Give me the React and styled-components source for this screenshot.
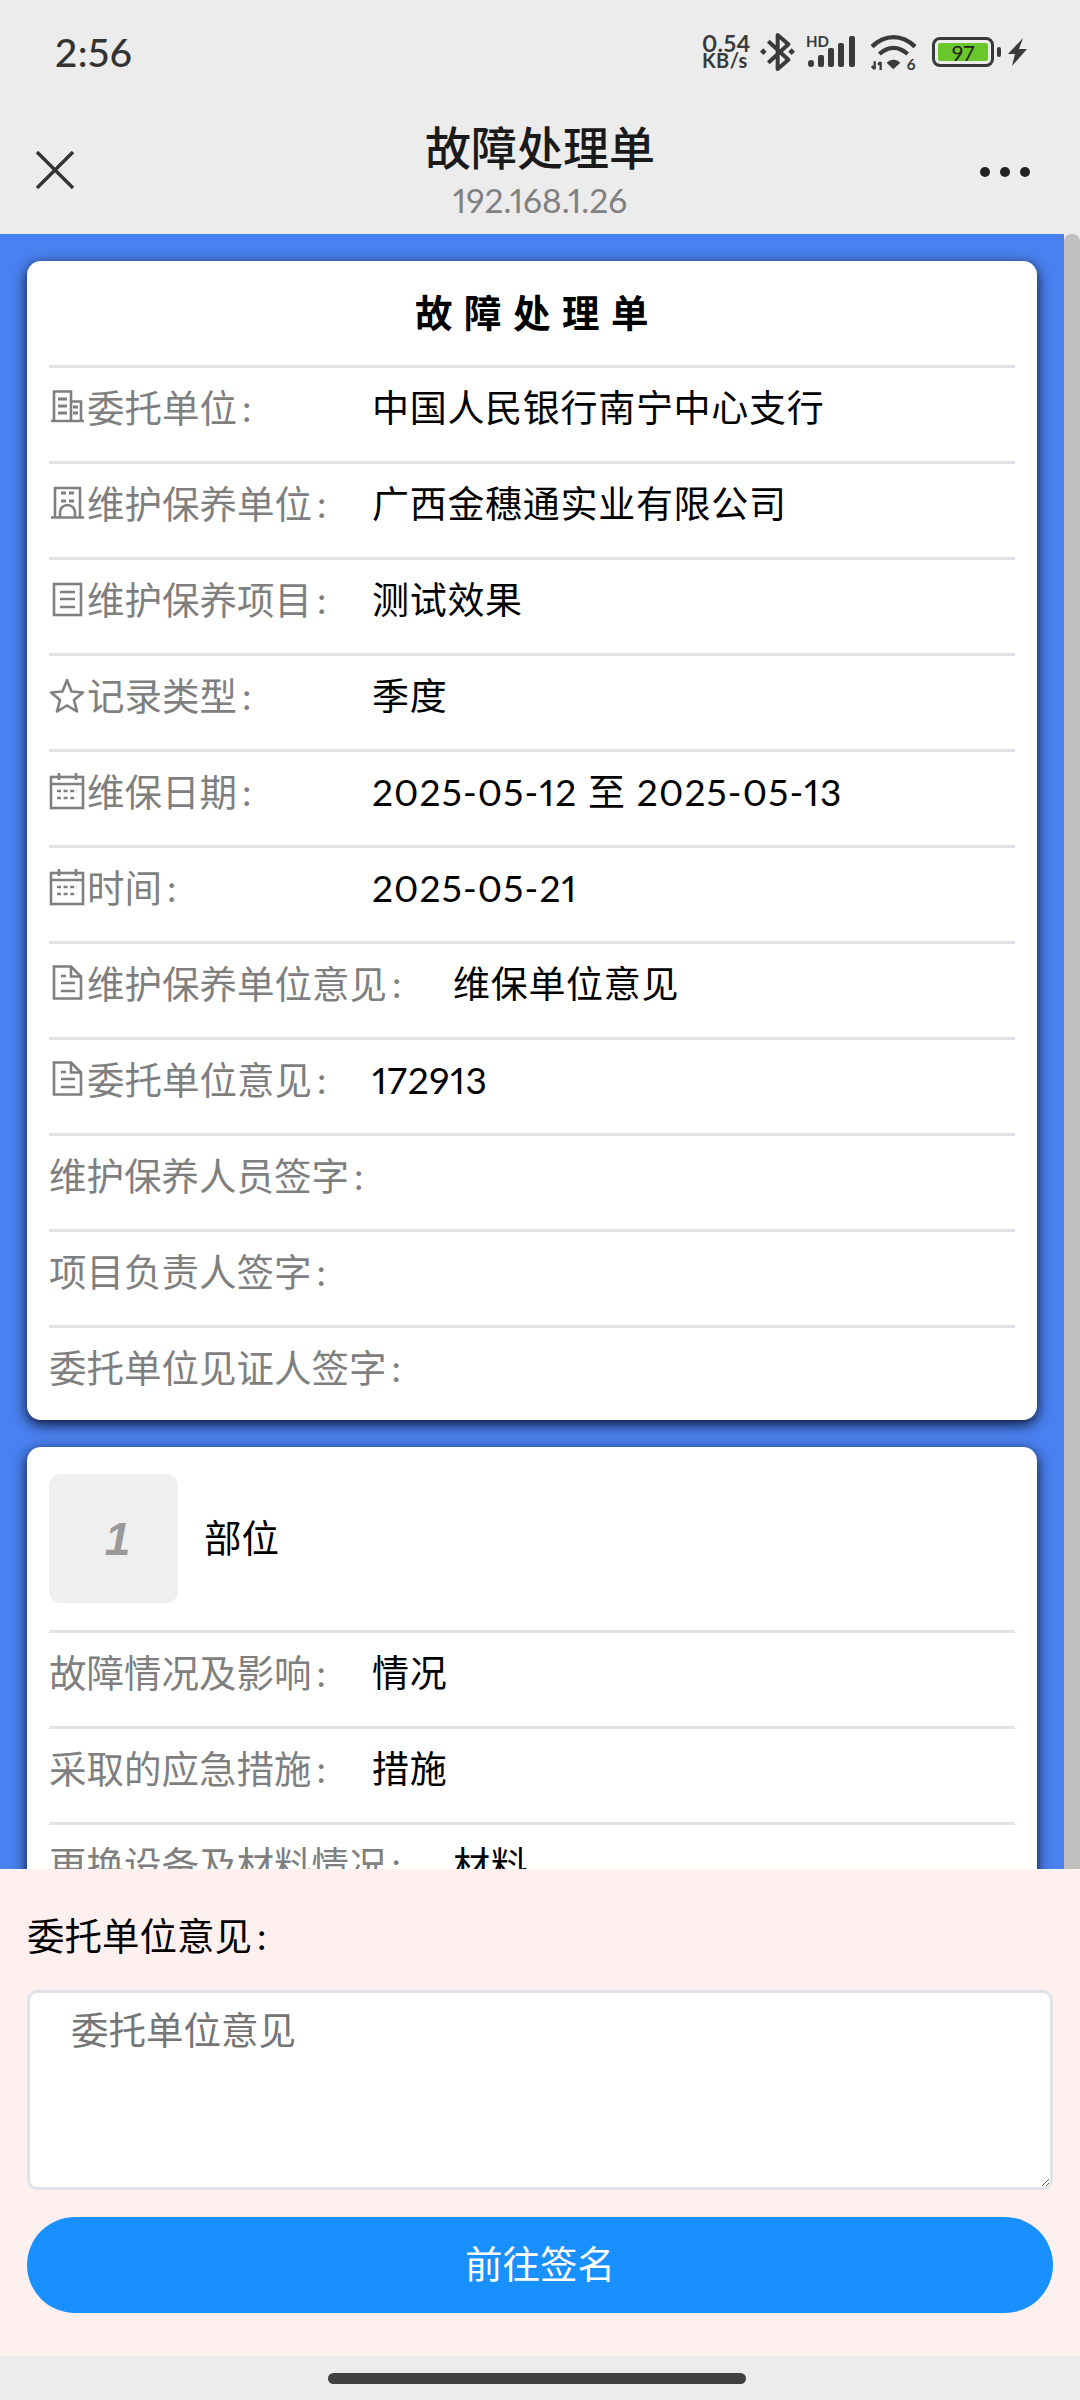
import React from 'react'
import styled, { createGlobalStyle } from 'styled-components'

const GlobalStyle = createGlobalStyle`
    html, body {
        margin: 0;
        padding: 0;
        background: #ececec;
    }
    * {
        box-sizing: border-box;
    }
    body {
        font-family: Lato, "Noto Sans CJK SC", sans-serif;
        font-variant-numeric: proportional-nums;
    }
`;

const Page = styled.div`
    width: 1080px;
    height: 2400px;
    display: flex;
    flex-direction: column;
    overflow: hidden;
    background: #ececec;
`;

const Top = styled.header`
    height: 234px;
    flex-shrink: 0;
    display: flex;
    flex-direction: column;
    background: #ececec;
`;

const StatusBar = styled.div`
    height: 104px;
    display: flex;
    align-items: center;
    padding: 0 53px 0 55px;
    color: #3a3a3a;
`;

const Time = styled.div`
    flex: 1;
    font-size: 39px;
    font-weight: 500;
    letter-spacing: 0.5px;
    color: #333;
`;

const StatusIcons = styled.div`
    display: flex;
    align-items: center;
`;

const Speed = styled.div`
    width: 48px;
    margin-right: 10px;
    font-size: 20px;
    font-weight: 700;
    line-height: 17px;
    letter-spacing: 0.4px;
    white-space: nowrap;
`;

const SpeedTop = styled.div`
    font-size: 23px;
`;

const Signal = styled.div`
    position: relative;
    width: 50px;
    height: 32px;
    margin: 0 14px 0 11px;
`;

const SignalTag = styled.span`
    position: absolute;
    left: 0;
    top: -2px;
    font-size: 15px;
    line-height: 14px;
    font-weight: 700;
`;

const Battery = styled.div`
    width: 62px;
    height: 30px;
    margin-left: 15px;
    padding: 3px;
    border: 3px solid #3a3a3a;
    border-radius: 8px;
`;

const BatteryFill = styled.div`
    height: 100%;
    display: flex;
    align-items: center;
    justify-content: center;
    border-radius: 2px;
    background: #69c72c;
    color: #222;
    font-size: 21px;
    line-height: 1;
`;

const BatteryNub = styled.div`
    width: 4px;
    height: 10px;
    margin: 0 7px 0 3px;
    border-radius: 2px;
    background: #3a3a3a;
`;

const NavBar = styled.div`
    flex: 1;
    display: grid;
    grid-template-columns: 130px 1fr 130px;
    align-items: center;
`;

const CloseIcon = styled.svg`
    width: 38px;
    height: 38px;
    margin: 2px 0 0 36px;
`;

const NavTitle = styled.div`
    display: flex;
    flex-direction: column;
    align-items: center;
`;

const TitleText = styled.div`
    font-size: 46px;
    line-height: 62px;
    font-weight: 500;
    color: #1a1a1a;
`;

const SubText = styled.div`
    font-size: 33.5px;
    line-height: 42px;
    color: #808080;
`;

const Dots = styled.div`
    justify-self: end;
    display: flex;
    gap: 10px;
    margin: 6px 50px 0 0;
`;

const Dot = styled.span`
    width: 10px;
    height: 10px;
    border-radius: 50%;
    background: #222;
`;

const Main = styled.main`
    flex: 1;
    min-height: 0;
    display: flex;
    overflow: hidden;
`;

const Scroller = styled.div`
    flex: 1;
    padding: 27px;
    background: #4a81f0;
`;

const ScrollThumb = styled.div`
    width: 16px;
    border-radius: 8px 8px 0 0;
    background: #bfbfbf;
`;

const Card = styled.section`
    margin-bottom: 27px;
    padding: 0 22px;
    border-radius: 14px;
    background: #fff;
    box-shadow: 0 4px 14px rgba(0, 0, 10, 0.9);
`;

const CardTitle = styled.h2`
    height: 104px;
    margin: 0;
    display: flex;
    align-items: center;
    justify-content: center;
    padding: 0 0 6px 11px;
    font-size: 37.5px;
    font-weight: 700;
    letter-spacing: 11.5px;
    color: #000;
`;

const Row = styled.div`
    height: 96px;
    display: flex;
    padding-top: 12px;
    border-top: 3px solid #e0e2e7;
    font-size: 37.5px;
    line-height: 55px;

    &:last-child {
        height: 95px;
    }
`;

const Label = styled.div`
    flex-shrink: 0;
    width: ${props => (props.$wide ? 404 : 323)}px;
    display: flex;
    align-items: center;
    height: 55px;
    color: #7f7f7f;
    white-space: nowrap;
`;

const Colon = styled.span`
    margin-left: 5px;
`;

const Value = styled.div`
    color: #000;
    font-size: 37px;
    letter-spacing: ${props => (props.$date ? 1.15 : 0.7)}px;
    white-space: nowrap;
`;

const IconBox = styled.svg`
    width: 36px;
    height: 36px;
    margin: -2px 2px 0 0;
    flex-shrink: 0;
    overflow: visible;
    fill: none;
    stroke: #7f7f7f;
    stroke-width: 2.6;
`;

const PartHead = styled.div`
    height: 183px;
    display: flex;
    align-items: center;
    gap: 26px;
    font-size: 37.5px;
    color: #000;
`;

const PartName = styled.span`
    margin-top: -6px;
`;

const PartNumber = styled.div`
    width: 129px;
    height: 129px;
    display: flex;
    align-items: center;
    justify-content: center;
    padding-left: 8px;
    border-radius: 12px;
    background: #efefef;
    color: #999;
    font-family: "Liberation Sans", sans-serif;
    font-size: 46px;
    font-weight: 700;
    font-style: italic;
`;

const Panel = styled.div`
    height: 487px;
    flex-shrink: 0;
    padding: 39px 27px 0;
    background: #fff0f0;
`;

const PanelLabel = styled.div`
    font-size: 37.5px;
    line-height: 55px;
    color: #000;
`;

const Textarea = styled.textarea`
    display: block;
    width: 1026px;
    height: 200px;
    margin-top: 27px;
    padding: 9px 41px;
    border: 3px solid #e0e2e7;
    border-radius: 10px;
    background: #fff;
    outline: none;
    font-family: inherit;
    font-size: 37.5px;
    line-height: 55px;

    &::placeholder {
        color: #757575;
        opacity: 1;
    }
`;

const SubmitButton = styled.button`
    display: block;
    width: 1026px;
    height: 96px;
    margin-top: 27px;
    padding: 0 0 7px;
    border: none;
    border-radius: 48px;
    background: #1890ff;
    color: #fff;
    font-family: inherit;
    font-size: 37.5px;
`;

const Footer = styled.div`
    height: 44px;
    flex-shrink: 0;
    display: flex;
    justify-content: center;
    padding: 17px 6px 0 0;
`;

const HomeBar = styled.div`
    width: 418px;
    height: 11px;
    border-radius: 6px;
    background: #404040;
`;

const BuildingIcon = () => (
  <IconBox viewBox="0 0 36 36">
    <path d="M2 32H35M5 32V2.5H22V32M22 12.5H32V32" />
    <path d="M9 10H18M9 17H18M9 24H18M24 18H29M24 24H29" strokeWidth="2.8" />
  </IconBox>
)

const OfficeIcon = () => (
  <IconBox viewBox="0 0 36 36">
    <path d="M2 32.5H35M6 32V3H31V32M11 32V27.5A7.5 7.5 0 0 1 26 27.5V32" />
    <path d="M12 8H17M20 8H25M12 16H17M20 16H25" strokeWidth="3" />
  </IconBox>
)

const ListIcon = () => (
  <IconBox viewBox="0 0 36 36">
    <rect x="5" y="3" width="27" height="31" />
    <path d="M11 11H26M11 18H26M11 26H26" />
  </IconBox>
)

const StarIcon = () => (
  <IconBox viewBox="0 0 36 36">
    <path d="M18 3L22.500 14.500L34 15.500L25 23L28 34.500L18 28.500L8 34.500L11 23L2 15.500L13.500 14.500Z" strokeLinejoin="round" />
  </IconBox>
)

const CalendarIcon = () => (
  <IconBox viewBox="0 0 36 36">
    <rect x="2" y="4" width="32" height="31" />
    <path d="M2 11H34M10 0V7M27 0V7" />
    <path d="M8 18H28M8 25H28" strokeWidth="2.6" strokeDasharray="4 2.600" />
  </IconBox>
)

const DocIcon = () => (
  <IconBox viewBox="0 0 36 36">
    <path d="M5 1.500H22L32 11.500V33.500H5Z" />
    <path d="M22 1.500V11.500H32M12 11H17M12 18H26M12 26H26" />
  </IconBox>
)

const Bluetooth = () => (
  <svg width="35" height="38" viewBox="0 0 105 114">
    <path d="M25 25L85 80L53 108V6L85 34L25 89" fill="none" stroke="#3a3a3a" strokeWidth="12" strokeLinejoin="round" />
    <path d="M10 46L20 56L10 66L0 56ZM95 46L105 56L95 66L85 56Z" fill="#3a3a3a" />
  </svg>
)

const SignalBars = () => (
  <svg width="50" height="32" viewBox="0 0 50 32">
    <rect x="2" y="24" width="6" height="7" rx="3" fill="#3a3a3a" />
    <rect x="12" y="19" width="6" height="12" rx="2" fill="#3a3a3a" />
    <rect x="22" y="12" width="6" height="19" rx="2" fill="#3a3a3a" />
    <rect x="32" y="7" width="6" height="24" rx="2" fill="#3a3a3a" />
    <rect x="43" y="0" width="6" height="31" rx="2" fill="#3a3a3a" />
  </svg>
)

const Wifi = () => (
  <svg width="47" height="37" viewBox="0 0 141 111">
    <path d="M6 38C45 0 96 0 135 38M28 60C55 36 86 36 113 60" fill="none" stroke="#3a3a3a" strokeWidth="13" />
    <path d="M50 86C62 74 79 74 91 86L70 106Z" fill="#3a3a3a" />
    <path d="M14 82V106M14 106L5 96M32 108V84M32 84L24 92" fill="none" stroke="#3a3a3a" strokeWidth="7" />
    <text x="110" y="109" fontSize="46" fontWeight="700" fill="#3a3a3a">6</text>
  </svg>
)

const Bolt = () => (
  <svg width="19" height="28" viewBox="0 0 19 28">
    <path d="M15 0L0 16H7L4 28L19 11H11Z" fill="#3a3a3a" />
  </svg>
)

const infoRows = [
  { icon: <BuildingIcon />, label: '委托单位', value: '中国人民银行南宁中心支行' },
  { icon: <OfficeIcon />, label: '维护保养单位', value: '广西金穗通实业有限公司' },
  { icon: <ListIcon />, label: '维护保养项目', value: '测试效果' },
  { icon: <StarIcon />, label: '记录类型', value: '季度' },
  { icon: <CalendarIcon />, label: '维保日期', value: '2025-05-12 至 2025-05-13', date: true },
  { icon: <CalendarIcon />, label: '时间', value: '2025-05-21', date: true },
  { icon: <DocIcon />, label: '维护保养单位意见', value: '维保单位意见', wide: true },
  { icon: <DocIcon />, label: '委托单位意见', value: '172913' },
  { label: '维护保养人员签字' },
  { label: '项目负责人签字' },
  { label: '委托单位见证人签字' },
]

const partRows = [
  { label: '故障情况及影响', value: '情况' },
  { label: '采取的应急措施', value: '措施' },
  { label: '更换设备及材料情况', value: '材料', wide: true },
]

const InfoRow = ({ icon, label, value, wide, date }) => (
  <Row>
    <Label $wide={wide}>
      {icon}
      {label}
      <Colon>:</Colon>
    </Label>
    <Value $date={date}>{value}</Value>
  </Row>
)

const App = () => {
  return (
    <Page>
      <GlobalStyle />
      <Top>
        <StatusBar>
          <Time>2:56</Time>
          <StatusIcons>
            <Speed>
              <SpeedTop>0.54</SpeedTop>
              KB/s
            </Speed>
            <Bluetooth />
            <Signal>
              <SignalTag>HD</SignalTag>
              <SignalBars />
            </Signal>
            <Wifi />
            <Battery>
              <BatteryFill>97</BatteryFill>
            </Battery>
            <BatteryNub />
            <Bolt />
          </StatusIcons>
        </StatusBar>
        <NavBar>
          <CloseIcon viewBox="0 0 38 38">
            <path d="M1 1L37 37M37 1L1 37" stroke="#333" strokeWidth="3.400" fill="none" />
          </CloseIcon>
          <NavTitle>
            <TitleText>故障处理单</TitleText>
            <SubText>192.168.1.26</SubText>
          </NavTitle>
          <Dots>
            <Dot />
            <Dot />
            <Dot />
          </Dots>
        </NavBar>
      </Top>
      <Main>
        <Scroller>
          <Card>
            <CardTitle>故障处理单</CardTitle>
            {infoRows.map(row => (
              <InfoRow key={row.label} {...row} />
            ))}
          </Card>
          <Card>
            <PartHead>
              <PartNumber>1</PartNumber>
              <PartName>部位</PartName>
            </PartHead>
            {partRows.map(row => (
              <InfoRow key={row.label} {...row} />
            ))}
          </Card>
        </Scroller>
        <ScrollThumb />
      </Main>
      <Panel>
        <PanelLabel>委托单位意见<Colon>:</Colon></PanelLabel>
        <Textarea placeholder="委托单位意见" />
        <SubmitButton>前往签名</SubmitButton>
      </Panel>
      <Footer>
        <HomeBar />
      </Footer>
    </Page>
  )
}

export default App
